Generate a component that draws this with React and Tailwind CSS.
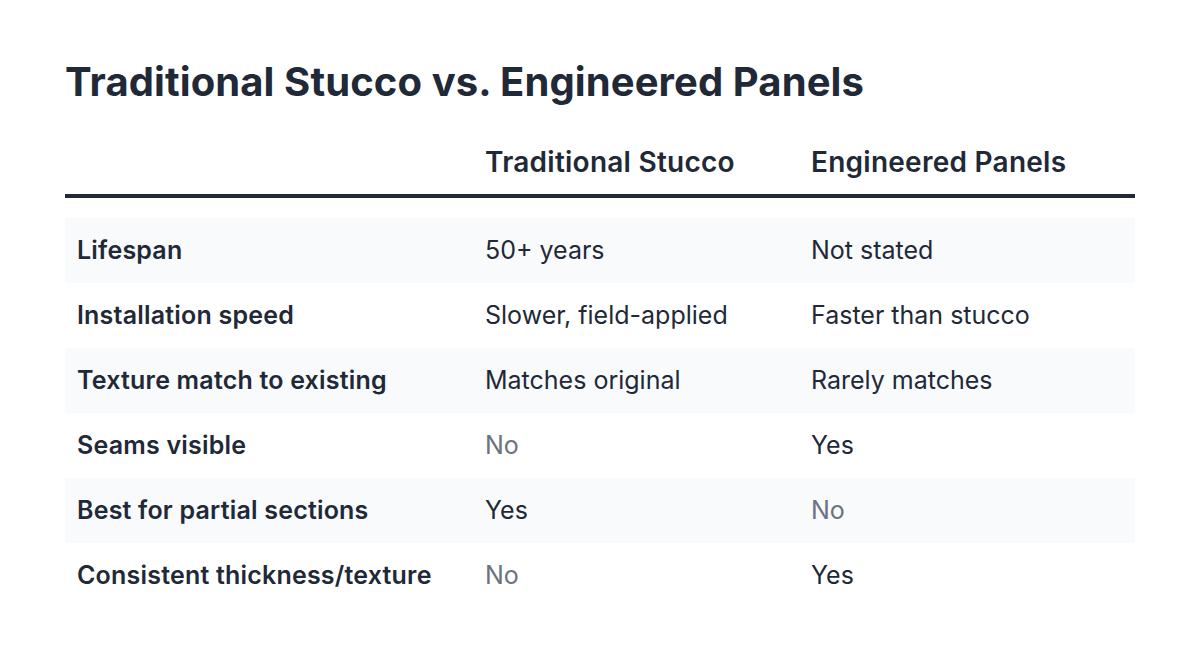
import React from 'react';

const rows = [
  { label: 'Lifespan', a: '50+ years', b: 'Not stated' },
  { label: 'Installation speed', a: 'Slower, field-applied', b: 'Faster than stucco' },
  { label: 'Texture match to existing', a: 'Matches original', b: 'Rarely matches' },
  { label: 'Seams visible', a: 'No', b: 'Yes' },
  { label: 'Best for partial sections', a: 'Yes', b: 'No' },
  { label: 'Consistent thickness/texture', a: 'No', b: 'Yes' },
];

const Cell = ({ value }) => (
  <div className={`px-3 flex items-center ${value === 'No' ? 'text-[#6b7280]' : 'text-[#1f2937]'}`}>
    {value}
  </div>
);

export default function App() {
  return (
    <div className="w-[1200px] h-[664px] bg-white font-['Inter',sans-serif] text-[#1f2937]">
      <div className="pl-[65px] pr-[65px] pt-[58px]">
        <h1 className="text-[40px] font-bold leading-[48px] tracking-[0.1px]">
          Traditional Stucco vs. Engineered Panels
        </h1>

        {/* Header */}
        <div className="mt-[38px] grid grid-cols-[408px_326px_1fr] border-b-[4px] border-[#1f2937] pb-[14px]">
          <div />
          <div className="px-3 text-[28px] font-semibold leading-[36px] tracking-[0.25px]">Traditional Stucco</div>
          <div className="px-3 text-[28px] font-semibold leading-[36px] tracking-[0.25px]">Engineered Panels</div>
        </div>

        {/* Rows */}
        <div className="mt-[20px]">
          {rows.map((r, i) => (
            <div
              key={r.label}
              className={`grid grid-cols-[408px_326px_1fr] h-[65px] text-[25px] ${i % 2 === 0 ? 'bg-[#f8fafc]' : 'bg-white'}`}
            >
              <div className="px-3 flex items-center font-semibold tracking-[0.2px]">{r.label}</div>
              <Cell value={r.a} />
              <Cell value={r.b} />
            </div>
          ))}
        </div>
      </div>
    </div>
  );
}
